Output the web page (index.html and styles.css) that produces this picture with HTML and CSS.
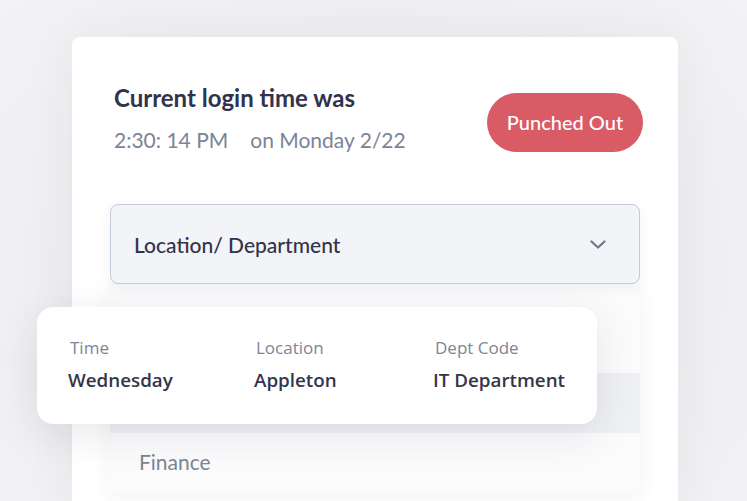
FILE: index.html
```html
<!DOCTYPE html>
<html lang="en">
<head>
<meta charset="utf-8">
<link rel="stylesheet" href="styles.css">
<title>Punch status</title>
</head>
<body>
<div class="stage">
  <div class="card">
    <div class="header">
      <div class="login">
        <h1 class="login-title">Current login time was</h1>
        <p class="login-time"><span class="clock">2:30: 14 PM</span><span class="date">on Monday 2/22</span></p>
      </div>
      <button class="status-btn">Punched Out</button>
    </div>
    <div class="select">
      <span class="select-label">Location/ Department</span>
      <svg class="chevron" width="16" height="9" viewBox="0 0 16 9"><path d="M1.5 1.5 L8 7.5 L14.5 1.5" fill="none" stroke="#6f7686" stroke-width="2.2" stroke-linecap="round" stroke-linejoin="round"/></svg>
    </div>
    <ul class="options">
      <li class="option">Operations</li>
      <li class="option option-active">IT Department</li>
      <li class="option">Finance</li>
    </ul>
  </div>
  <div class="tooltip">
    <div class="field">
      <span class="field-label">Time</span>
      <span class="field-value">Wednesday</span>
    </div>
    <div class="field">
      <span class="field-label">Location</span>
      <span class="field-value">Appleton</span>
    </div>
    <div class="field">
      <span class="field-label">Dept Code</span>
      <span class="field-value">IT Department</span>
    </div>
  </div>
</div>
</body>
</html>
```

FILE: styles.css
```css
* { box-sizing: border-box; }
html, body { margin: 0; padding: 0; }
body {
  width: 747px;
  height: 501px;
  overflow: hidden;
  background: radial-gradient(ellipse at 50% 55%, #ebebef 0%, #eeeef1 55%, #f3f3f5 100%);
  font-family: "Lato", "Noto Sans", sans-serif;
}
.stage {
  position: relative;
  height: 501px;
  padding: 37px 0 0 72px;
}
.card {
  width: 606px;
  height: 480px;
  background: #ffffff;
  border-radius: 8px;
  box-shadow: 0 0 50px rgba(40, 44, 70, 0.06);
  padding: 0 38px 0 38px;
}
.header {
  display: flex;
  align-items: flex-start;
  justify-content: space-between;
  padding: 46px 0 0 4px;
  margin-right: -3px;
  height: 167px;
}
.login-title {
  margin: 0;
  font-size: 24px;
  line-height: 30px;
  font-weight: 700;
  color: #32334a;
}
.login-time {
  margin: 14px 0 0 0;
  font-size: 21px;
  line-height: 26px;
  color: #7b8497;
  display: flex;
  gap: 22px;
}
.status-btn {
  margin-top: 10px;
  width: 156px;
  height: 59px;
  border: none;
  border-radius: 30px;
  background: #d95b66;
  color: #ffffff;
  font-family: inherit;
  font-size: 20px;
  font-weight: 500;
  padding: 0 0 2px 0;
}
.select {
  height: 80px;
  background: #f3f4f7;
  border: 1px solid #c3cad8;
  border-radius: 8px;
  display: flex;
  align-items: center;
  justify-content: space-between;
  padding: 0 33px 0 23px;
  box-shadow: 0 4px 14px rgba(40, 44, 70, 0.06);
  position: relative;
  z-index: 1;
}
.select-label {
  font-size: 21px;
  color: #32334a;
  font-weight: 500;
}
.options {
  list-style: none;
  margin: 0;
  padding: 29px 0 0 0;
  background: #fbfbfc;
  box-shadow: 0 6px 20px rgba(40, 44, 70, 0.06);
}
.option {
  height: 60px;
  display: flex;
  align-items: center;
  padding: 0 0 3px 29px;
  font-size: 21px;
  color: #7b8497;
}
.option-active { background: #eef0f3; }
.tooltip {
  position: absolute;
  left: 37px;
  top: 307px;
  width: 560px;
  height: 117px;
  background: #ffffff;
  border-radius: 16px;
  box-shadow: 0 10px 40px rgba(40, 44, 70, 0.10);
  display: grid;
  grid-template-columns: 186px 179px 1fr;
  align-content: center;
  padding: 0 0 3px 31px;
  font-family: "Open Sans", "Noto Sans", sans-serif;
}
.field { display: flex; flex-direction: column; gap: 11px; }
.field-label {
  font-size: 17px;
  line-height: 20px;
  color: #7c8598;
  padding-left: 2px;
}
.field-value {
  font-size: 18.8px;
  line-height: 22px;
  font-weight: 600;
  color: #34354b;
}
```
